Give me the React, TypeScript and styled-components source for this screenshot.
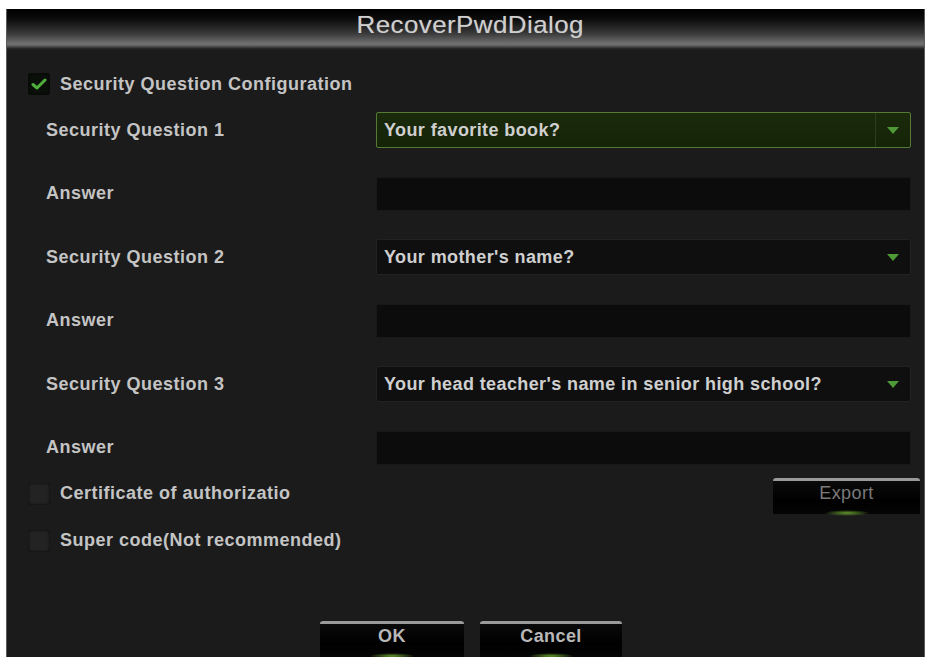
import React from "react";
import styled, { createGlobalStyle } from "styled-components";

const Global = createGlobalStyle`
  html, body { margin: 0; padding: 0; background: #ffffff; }
  body { font-family: "Liberation Sans", Arial, sans-serif; }
`;

const Page = styled.div`
  padding: 9px 6px 5px 6px;
  width: 931px;
  height: 662px;
  box-sizing: border-box;
`;

const Dialog = styled.div`
  height: 648px;
  display: flex;
  flex-direction: column;
  background: #1b1b1b;
  border-left: 1px solid #5a5a5a;
  border-right: 1px solid #5a5a5a;
  box-sizing: border-box;
  overflow: hidden;
`;

const TitleBar = styled.div`
  height: 41px;
  flex: none;
  display: flex;
  justify-content: center;
  align-items: flex-start;
  background: linear-gradient(
    to bottom,
    #000 0%,
    #0c0c0c 25%,
    #3a3a3a 60%,
    #707070 84%,
    #6a6a6a 88%,
    #2a2a2a 96%,
    #1b1b1b 100%
  );
`;

const Title = styled.div`
  font-size: 24px;
  line-height: 32px;
  color: #cfcfcf;
  letter-spacing: 0.4px;
  margin-left: 10px;
  transform: scaleX(1.08);
  text-shadow: 0 0 1px rgba(255, 255, 255, 0.3);
`;

const Body = styled.div`
  flex: 1;
  display: flex;
  flex-direction: column;
  padding: 22px 14px 0 21px;
`;

const CheckRow = styled.div`
  display: flex;
  align-items: center;
  gap: 10px;
  height: 24px;
`;

const Box = styled.div<{ $checked?: boolean }>`
  width: 22px;
  height: 22px;
  border-radius: 3px;
  background: ${(p) => (p.$checked ? "#0b0f0a" : "#232323")};
  box-shadow: inset 0 0 3px rgba(0, 0, 0, 0.9);
  display: flex;
  align-items: center;
  justify-content: center;
  flex: none;
`;

const Text = styled.span`
  font-size: 18px;
  font-weight: bold;
  color: #c4c4c4;
  letter-spacing: 0.5px;
  white-space: nowrap;
`;

const FormGrid = styled.div`
  display: grid;
  grid-template-columns: 330px 535px;
  grid-auto-rows: 36px;
  row-gap: 27.5px;
  margin-top: 16px;
  margin-left: 18px;
`;

const Label = styled.div`
  display: flex;
  align-items: center;
  font-size: 18px;
  font-weight: bold;
  color: #c4c4c4;
  letter-spacing: 0.5px;
`;

const Select = styled.div<{ $active?: boolean }>`
  display: flex;
  align-items: center;
  box-sizing: border-box;
  background: ${(p) => (p.$active ? "linear-gradient(#1b2a0b, #152307)" : "#0f0f0f")};
  border: 1px solid ${(p) => (p.$active ? "#557a33" : "#222")};
  border-radius: 2px;
  padding-left: 7px;
`;

const SelectText = styled.span`
  flex: 1;
  font-size: 18px;
  font-weight: bold;
  color: #cfcfcf;
  letter-spacing: 0.4px;
  white-space: nowrap;
`;

const ArrowCell = styled.div<{ $active?: boolean }>`
  width: 34px;
  height: 100%;
  display: flex;
  align-items: center;
  justify-content: center;
  border-left: 1px solid ${(p) => (p.$active ? "#2c3f1a" : "transparent")};
`;

const Input = styled.div`
  box-sizing: border-box;
  margin-top: 1px;
  height: 34px;
  background: #0c0c0c;
  border: 1px solid #181818;
`;

const BottomArea = styled.div`
  display: flex;
  justify-content: space-between;
  align-items: flex-start;
  margin-top: 12px;
`;

const Checks = styled.div`
  display: flex;
  flex-direction: column;
  padding-top: 4px;
  gap: 23px;
`;

const Btn = styled.div<{ $w: number }>`
  position: relative;
  width: ${(p) => p.$w}px;
  height: 36px;
  box-sizing: border-box;
  background: linear-gradient(#0a0a0a, #000 60%, #050505);
  border-top: 3px solid #9a9a9a;
  border-radius: 3px 3px 0 0;
  display: flex;
  justify-content: center;
  align-items: flex-start;
  padding-top: 2px;
  font-size: 18px;
  font-weight: bold;
  color: #b8b8b8;
  letter-spacing: 0.4px;
  &::after {
    content: "";
    position: absolute;
    left: 50%;
    bottom: -2px;
    width: 46px;
    height: 6px;
    margin-left: -23px;
    border-radius: 50%;
    background: radial-gradient(ellipse at center, rgba(110, 170, 50, 0.9), rgba(60, 110, 20, 0) 70%);
  }
`;

const ExportBtn = styled(Btn)`
  color: #7a7a7a;
  font-weight: normal;
  margin-right: -10px;
`;

const Footer = styled.div`
  margin-top: auto;
  display: flex;
  justify-content: center;
  gap: 16px;
  padding-left: 4px;
`;

const Check = () => (
  <svg width="16" height="14" viewBox="0 0 16 14">
    <path d="M2 7.5 L6 11 L14 3" fill="none" stroke="#4fae3c" strokeWidth="3" strokeLinecap="round" strokeLinejoin="round" />
  </svg>
);

const Arrow = () => (
  <svg width="14" height="9" viewBox="0 0 14 9">
    <path d="M1 1 L13 1 L7 8 Z" fill="#4e9a36" />
  </svg>
);

const questions = [
  { q: "Security Question 1", v: "Your favorite book?", active: true },
  { q: "Security Question 2", v: "Your mother's name?", active: false },
  { q: "Security Question 3", v: "Your head teacher's name in senior high school?", active: false },
];

export default function App() {
  return (
    <>
      <Global />
      <Page>
        <Dialog>
          <TitleBar>
            <Title>RecoverPwdDialog</Title>
          </TitleBar>
          <Body>
            <CheckRow>
              <Box $checked>
                <Check />
              </Box>
              <Text>Security Question Configuration</Text>
            </CheckRow>
            <FormGrid>
              {questions.map((item) => (
                <React.Fragment key={item.q}>
                  <Label>{item.q}</Label>
                  <Select $active={item.active}>
                    <SelectText>{item.v}</SelectText>
                    <ArrowCell $active={item.active}>
                      <Arrow />
                    </ArrowCell>
                  </Select>
                  <Label>Answer</Label>
                  <Input />
                </React.Fragment>
              ))}
            </FormGrid>
            <BottomArea>
              <Checks>
                <CheckRow>
                  <Box />
                  <Text>Certificate of authorizatio</Text>
                </CheckRow>
                <CheckRow>
                  <Box />
                  <Text>Super code(Not recommended)</Text>
                </CheckRow>
              </Checks>
              <ExportBtn $w={147}>Export</ExportBtn>
            </BottomArea>
            <Footer>
              <Btn $w={144}>OK</Btn>
              <Btn $w={142}>Cancel</Btn>
            </Footer>
          </Body>
        </Dialog>
      </Page>
    </>
  );
}
